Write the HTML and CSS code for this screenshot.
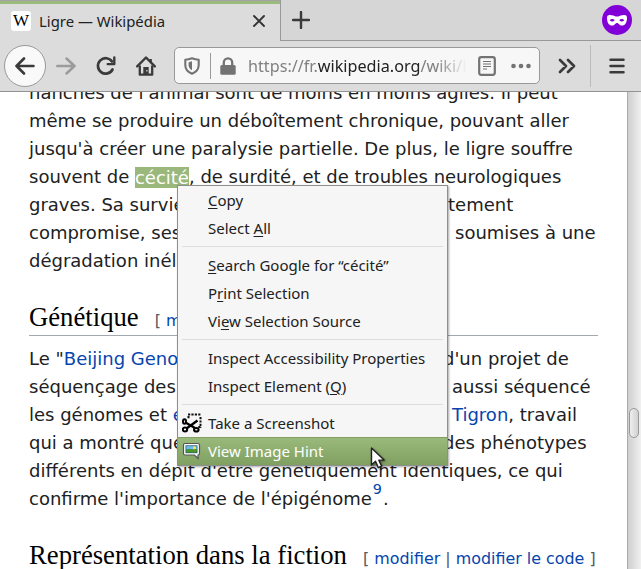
FILE: index.html
```html
<!DOCTYPE html>
<html lang="fr">
<head>
<meta charset="utf-8">
<title>Ligre — Wikipédia</title>
<link rel="stylesheet" href="styles.css">
</head>
<body>
<header class="tabs">
  <div class="tab">
    <span class="favicon">W</span>
    <span class="tab-title">Ligre — Wikipédia</span>
    <svg class="close" width="14" height="14" viewBox="0 0 14 14"><path d="M2 2l10 10M12 2L2 12" stroke="#333" stroke-width="1.9" stroke-linecap="round"/></svg>
  </div>
  <div class="tab-strip">
    <svg width="18" height="18" viewBox="0 0 18 18"><path d="M9 1v16M1 9h16" stroke="#3a3a3a" stroke-width="2.4" stroke-linecap="round"/></svg>
    <svg class="mask" width="30" height="30" viewBox="0 0 30 30"><circle cx="15" cy="15" r="15" fill="#8000d7"/><path fill="#fff" fill-rule="evenodd" d="M5 13c0-3 2-3.200 4.500-2.800 3 .4 3.500 1.300 5.500 1.300s2.500-.9 5.500-1.300C23 9.800 25 10 25 13c0 4.500-2 7.600-5 7.600-2.800 0-3.200-2.600-5-2.600s-2.200 2.600-5 2.600c-3 0-5-3.100-5-7.600zm2.700 2.300c1.500 1.800 4 1.700 5-.2-1.400-1.700-3.600-1.600-5 .2zm9.600-.2c1 1.900 3.500 2 5 .2-1.400-1.800-3.600-1.900-5-.2z"/></svg>
  </div>
</header>
<nav class="toolbar">
  <span class="back"><svg width="20" height="18" viewBox="0 0 20 18"><path d="M18.500 9H1.500M9 1.500L1.500 9 9 16.500" fill="none" stroke="#3a3a3a" stroke-width="2.600" stroke-linecap="round" stroke-linejoin="round"/></svg></span>
  <svg class="forward" width="20" height="18" viewBox="0 0 20 18"><path d="M1.300 9h17.200M10.500 1.500L18.500 9l-8 7.500" fill="none" stroke="#9b9b9b" stroke-width="2.500" stroke-linecap="round" stroke-linejoin="round"/></svg>
  <svg class="reload" width="20" height="20" viewBox="0 0 20 20"><path d="M16.500 13.500A7.700 7.700 0 1 1 16 5.500" fill="none" stroke="#3a3a3a" stroke-width="2.700" stroke-linecap="round"/><path d="M18.300 1.500v6.600h-6.600" fill="none" stroke="#3a3a3a" stroke-width="2.400" stroke-linejoin="round" stroke-linecap="round"/></svg>
  <svg class="home" width="20" height="20" viewBox="0 0 20 20"><path d="M1.200 10.300L10 1.500l8.800 8.800" fill="none" stroke="#3a3a3a" stroke-width="2.400" stroke-linecap="round" stroke-linejoin="round"/><path d="M3.800 9.500v9.200h12.400V9.500M14.700 3v3" fill="none" stroke="#3a3a3a" stroke-width="2.300" stroke-linejoin="round"/><path fill="#3a3a3a" d="M7.300 11h5.400v8H7.300z"/><path fill="#ddd" d="M10.300 14h1.200v1.500h-1.200z"/></svg>
  <div class="urlbar">
    <svg width="16" height="18" viewBox="0 0 16 18"><path d="M8 1.300c2.200.9 4.300 1.400 6.700 1.400V8c0 4-2.300 7-6.700 8.700C3.600 15 1.300 12 1.300 8V2.700C3.700 2.700 5.800 2.200 8 1.300z" fill="none" stroke="#737373" stroke-width="2.100" stroke-linejoin="round"/><path fill="#737373" d="M8 4.300v9C5.700 12 4.600 10.500 4.600 8V5.200c1.200-.1 2.300-.4 3.400-.9z"/></svg>
    <span class="url-sep"></span>
    <svg class="lock" width="16" height="18" viewBox="0 0 16 18"><rect x=".3" y="8" width="15.400" height="9.700" rx="1.500" fill="#737373"/><path d="M3.800 9V5.500a4.200 4.200 0 0 1 8.400 0V9" fill="none" stroke="#737373" stroke-width="2.300"/></svg>
    <span class="url">https://fr.<b>wikipedia.org</b>/wiki/L</span>
    <svg class="reader" width="18" height="20" viewBox="0 0 18 20"><rect x="1.200" y="1.200" width="15.600" height="17.600" rx="2" fill="none" stroke="#737373" stroke-width="2.200"/><path d="M5 5.500h8M5 8h8M5 10.500h8M5 13h4" stroke="#737373" stroke-width="1.200"/></svg>
    <svg class="dots" width="20" height="6" viewBox="0 0 20 6"><g fill="#737373"><circle cx="2.500" cy="3" r="2.300"/><circle cx="10" cy="3" r="2.300"/><circle cx="17.500" cy="3" r="2.300"/></g></svg>
  </div>
  <svg class="more" width="18" height="16" viewBox="0 0 18 16"><path d="M2 2l6 6-6 6M10 2l6 6-6 6" fill="none" stroke="#3a3a3a" stroke-width="2.700" stroke-linecap="round" stroke-linejoin="round"/></svg>
  <span class="tool-sep"></span>
  <svg width="16" height="16" viewBox="0 0 16 16"><path d="M1.500 1.700h13M1.500 8h13M1.500 14.300h13" stroke="#3a3a3a" stroke-width="2.500" stroke-linecap="round"/></svg>
</nav>
<main class="view">
  <article class="page">
    <p class="first">
      <span class="line">hanches de l'animal sont de moins en moins agiles. Il peut</span>
      <span class="line">même se produire un déboîtement chronique, pouvant aller</span>
      <span class="line">jusqu'à créer une paralysie partielle. De plus, le ligre souffre</span>
      <span class="line">souvent de <mark>cécité</mark>, de surdité, et de troubles neurologiques</span>
      <span class="line"><span class="start">graves. Sa survie</span><span>tement</span></span>
      <span class="line"><span class="start">compromise, ses</span><span class="r6">soumises à une</span></span>
      <span class="line">dégradation inél</span>
    </p>
    <h2 class="ruled">Génétique <span class="edit">[ <a>m</a></span></h2>
    <p>
      <span class="line"><span class="start">Le "<a>Beijing Geno</a></span><span class="r1">d'un projet de</span></span>
      <span class="line"><span class="start">séquençage des</span><span class="r5">aussi séquencé</span></span>
      <span class="line"><span class="start">les génomes et <a>e</a></span><span class="r5"><a>Tigron</a>, travail</span></span>
      <span class="line"><span class="start">qui a montré que</span><span class="r1">des phénotypes</span></span>
      <span class="line">différents en dépit d'être génétiquement identiques, ce qui</span>
      <span class="line">confirme l'importance de l'épigénome<sup><a>9</a></sup>.</span>
    </p>
    <h2>Représentation dans la fiction <span class="edit">[ <a>modifier</a> | <a>modifier le code</a> ]</span></h2>
  </article>
  <aside class="scrollbar"><span class="thumb"></span></aside>
</main>
<div class="menu">
  <div class="item"><u>C</u>opy</div>
  <div class="item">Select <u>A</u>ll</div>
  <hr>
  <div class="item"><u>S</u>earch Google for “cécité”</div>
  <div class="item">P<u>r</u>int Selection</div>
  <div class="item">Vi<u>e</u>w Selection Source</div>
  <hr>
  <div class="item">Inspect Accessibility Properties</div>
  <div class="item">Inspect Element (<u>Q</u>)</div>
  <hr>
  <div class="item"><svg class="icon" width="20" height="20" viewBox="0 0 20 20"><path d="M6 1.500h13.500M18.500 4v11M6.500 3v2.500M18.500 14h-3" fill="none" stroke="#111" stroke-width="2" stroke-dasharray="2.200 1.200"/><g fill="none" stroke="#000" stroke-width="2"><ellipse cx="2.500" cy="8.500" rx="1.500" ry="2.200"/><ellipse cx="3" cy="16.500" rx="2.200" ry="1.900"/><ellipse cx="14.300" cy="16.800" rx="2.300" ry="1.800"/></g><path d="M3.500 9.500l9.500 5.500M4.500 15.500L15.500 7.500" stroke="#000" stroke-width="2.300"/></svg>Take a Screenshot</div>
  <div class="item selected"><svg class="icon" width="20" height="20" viewBox="0 0 20 20"><path d="M3 2.500h13q1.500 0 1.500 1.500v8.500q0 1.500-1.500 1.500v3.500L12.500 14H3q-1.500 0-1.500-1.500V4Q1.500 2.500 3 2.500z" fill="#fff" stroke="#555" stroke-width="1.200"/><path fill="#265f84" d="M3.500 4.300h12v7.900h-12z"/><path fill="#70bde9" d="M4.300 5.100h10.400v3.400H4.300z"/><path fill="#4b971f" d="M4.300 9l3-1.200 3 1 4.400-.7v3.300H4.300z"/><circle cx="12.500" cy="6.800" r="1.500" fill="#ffe848"/></svg>View Image Hint</div>
</div>
<svg class="cursor" width="16" height="24" viewBox="0 0 16 24"><path d="M1.500 1v17l4-3.700 2.800 6.300 3.300-1.500-2.800-6h5.300z" fill="#fff" stroke="#222" stroke-width="1.400" stroke-linejoin="round"/></svg>
</body>
</html>
```

FILE: styles.css
```css
* { box-sizing: border-box; }
body { margin: 0; width: 641px; height: 569px; overflow: hidden; position: relative; background: #fff; font-family: "Noto Sans", sans-serif; color: #202122; }
svg { display: block; flex: none; }
.tabs { display: flex; height: 41px; background: #dcdcdc; }
.tab { display: flex; align-items: center; width: 280px; border-top: 1px solid #a3a3a3; box-shadow: inset 0 3px #9bba7d; padding: 0 14px 0 11px; }
.favicon { width: 20px; height: 20px; border-radius: 3px; background: #fff; color: #000; font: 17px/19px "Liberation Serif", serif; display: flex; justify-content: center; }
.tab-title { margin-left: 8px; font-size: 14.9px; flex: 1; white-space: nowrap; }
.tab-strip { flex: 1; display: flex; justify-content: space-between; align-items: center; background: #d6d6d6; border-left: 1px solid #999; border-bottom: 1px solid #999; padding: 0 9px 0 11px; }
.toolbar { display: flex; align-items: center; height: 51px; padding: 0 16px 1px 4px; background: #dcdcdc; border-bottom: 1px solid #929292; }
.back { width: 42px; height: 42px; border: 1px solid #999; border-radius: 50%; background: #f9f9f9; display: flex; align-items: center; justify-content: center; flex: none; }
.forward { margin-left: 10px; }
.reload { margin-left: 20px; }
.home { margin-left: 20px; }
.urlbar { display: flex; align-items: center; margin-left: 18px; width: 366px; height: 37px; border: 1px solid #999; border-radius: 5px; background: #f7f7f7; padding: 0 7px 0 9px; flex: none; }
.url-sep { width: 1px; height: 26px; background: #999; margin: 0 9px 0 10px; }
.url { margin-left: 12px; width: 219px; overflow: hidden; white-space: nowrap; font-size: 16.2px; color: #808080; mask-image: linear-gradient(90deg, #000 86%, transparent 100%); }
.url b { font-weight: 400; color: #222; }
.reader { margin-left: 11px; }
.dots { margin-left: 15px; }
.more { margin-left: 18px; }
.tool-sep { width: 1px; height: 42px; background: #bbb; margin: 0 18px 0 14px; }
.view { display: flex; height: 477px; overflow: hidden; }
.page { width: 627px; padding-left: 29px; margin-top: -13px; flex: none; }
.page p { margin: 0; font: 18px/28px "DejaVu Sans", sans-serif; }
.line { display: flex; white-space: pre; height: 28px; }
.start { width: 419px; }
.r1 { margin-left: -5px; }
.r5 { margin-left: 4px; }
.r6 { margin-left: 7px; }
mark { background: #9ab87c; color: #fff; height: 21px; line-height: 21px; margin-top: 4px; }
a { color: #0645ad; }
sup { font-size: 14.4px; line-height: 14px; height: 14px; margin: -3px 1px 0; }
h2 { display: flex; align-items: baseline; width: 569px; height: 39px; margin: 22px 0 9px; font: 400 26.700px/41px "Liberation Serif", serif; color: #000; white-space: nowrap; }
.ruled { border-bottom: 1px solid #a2a9b1; }
.edit { margin-left: 16px; font: 15.900px "DejaVu Sans", sans-serif; color: #54595d; }
.scrollbar { width: 14px; height: 477px; border-left: 1px solid #aaa; background: linear-gradient(90deg, #cfcfcf, #f0f0f0); padding: 316px 2px 0 1px; }
.thumb { display: block; width: 10px; height: 30px; border: 1px solid #999; border-radius: 5px; background: linear-gradient(90deg, #eee, #d2d2d2); }
.menu { position: absolute; left: 177px; top: 185px; width: 271px; height: 281px; background: #f6f6f6; border: 1px solid #8c8f8c; box-shadow: 1px 1px 2px #0005; font-size: 15px; }
.item { position: relative; height: 28px; line-height: 28px; padding-left: 30px; white-space: nowrap; }
.item u { text-underline-offset: 2px; text-decoration-thickness: 1px; }
.menu hr { height: 1px; margin: 4px; border: 0; background: #ddd; }
.icon { position: absolute; left: 4px; top: 4px; }
.selected { color: #fff; background: linear-gradient(#9aba7c, #80a061); border-top: 1px solid #819e67; line-height: 26px; }
.selected .icon { top: 3px; }
.cursor { position: absolute; left: 370px; top: 447px; filter: drop-shadow(1px 1px 1px #0006); }
```
